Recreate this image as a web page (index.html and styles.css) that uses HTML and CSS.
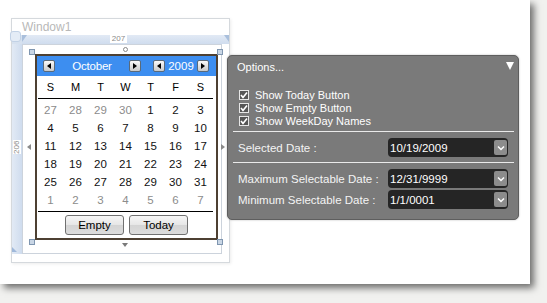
FILE: index.html
```html
<!DOCTYPE html>
<html>
<head>
<meta charset="utf-8">
<link rel="stylesheet" href="styles.css">
</head>
<body>
<div class="page">
  <div class="window">
    <div class="win-title">Window1</div>
    <div class="win-body">
      <div class="corner"><span class="corner-icon"></span></div>
      <div class="ruler-top"><span class="tick-l"></span><span class="ruler-label">207</span><span class="tick-r"></span></div>
      <div class="ruler-left"><span class="ruler-label vert">206</span><span class="tick-b"></span></div>
      <div class="surface">
        <div class="cal-wrap">
          <span class="handle h-tl"></span><span class="handle h-tr"></span>
          <span class="handle h-bl"></span><span class="handle h-br"></span>
          <span class="rot-dot"></span>
          <span class="arr arr-l"></span><span class="arr arr-r"></span><span class="arr arr-b"></span>
          <div class="calendar">
            <div class="cal-head">
              <div class="month-nav">
                <span class="nav-btn"><span class="tri-l"></span></span>
                <span class="month">October</span>
                <span class="nav-btn"><span class="tri-r"></span></span>
              </div>
              <div class="year-nav">
                <span class="nav-btn"><span class="tri-l"></span></span>
                <span class="year">2009</span>
                <span class="nav-btn"><span class="tri-r"></span></span>
              </div>
            </div>
            <div class="day-names"><span>S</span><span>M</span><span>T</span><span>W</span><span>T</span><span>F</span><span>S</span></div>
            <div class="rule"></div>
            <div class="dates">
              <span class="other">27</span><span class="other">28</span><span class="other">29</span><span class="other">30</span><span>1</span><span>2</span><span>3</span>
              <span>4</span><span>5</span><span>6</span><span>7</span><span>8</span><span>9</span><span>10</span>
              <span>11</span><span>12</span><span>13</span><span>14</span><span>15</span><span>16</span><span>17</span>
              <span>18</span><span>19</span><span>20</span><span>21</span><span>22</span><span>23</span><span>24</span>
              <span>25</span><span>26</span><span>27</span><span>28</span><span>29</span><span>30</span><span>31</span>
              <span class="other">1</span><span class="other">2</span><span class="other">3</span><span class="other">4</span><span class="other">5</span><span class="other">6</span><span class="other">7</span>
            </div>
            <div class="rule"></div>
            <div class="cal-foot">
              <span class="btn">Empty</span>
              <span class="btn">Today</span>
            </div>
          </div>
        </div>
      </div>
    </div>
  </div>

  <div class="options">
    <div class="opt-head">
      <span>Options...</span>
      <span class="opt-tri"></span>
    </div>
    <div class="checks">
      <div class="check-row"><span class="cb"><svg width="8" height="8" viewBox="0 0 8 8"><polyline points="1,4 3,6.5 7,1.5" fill="none" stroke="#fff" stroke-width="1.6"/></svg></span>Show Today Button</div>
      <div class="check-row"><span class="cb"><svg width="8" height="8" viewBox="0 0 8 8"><polyline points="1,4 3,6.5 7,1.5" fill="none" stroke="#fff" stroke-width="1.6"/></svg></span>Show Empty Button</div>
      <div class="check-row"><span class="cb"><svg width="8" height="8" viewBox="0 0 8 8"><polyline points="1,4 3,6.5 7,1.5" fill="none" stroke="#fff" stroke-width="1.6"/></svg></span>Show WeekDay Names</div>
    </div>
    <div class="sep sep-first"></div>
    <div class="fields">
      <div class="field"><span class="lbl">Selected Date :</span><span class="dd"><span class="dd-val">10/19/2009</span><span class="dd-btn"><svg width="8" height="6" viewBox="0 0 8 6"><polyline points="1,1.5 4,4.5 7,1.5" fill="none" stroke="#fff" stroke-width="1.5"/></svg></span></span></div>
    </div>
    <div class="sep"></div>
    <div class="fields two">
      <div class="field"><span class="lbl">Maximum Selectable Date :</span><span class="dd"><span class="dd-val">12/31/9999</span><span class="dd-btn"><svg width="8" height="6" viewBox="0 0 8 6"><polyline points="1,1.5 4,4.5 7,1.5" fill="none" stroke="#fff" stroke-width="1.5"/></svg></span></span></div>
      <div class="field"><span class="lbl">Minimum Selectable Date :</span><span class="dd"><span class="dd-val">1/1/0001</span><span class="dd-btn"><svg width="8" height="6" viewBox="0 0 8 6"><polyline points="1,1.5 4,4.5 7,1.5" fill="none" stroke="#fff" stroke-width="1.5"/></svg></span></span></div>
    </div>
  </div>
</div>
</body>
</html>
```
FILE: styles.css
```css
html, body { margin: 0; padding: 0; }
body {
  background: #f1f1ef;
  font-family: "Liberation Sans", Arial, sans-serif;
  width: 547px;
  height: 303px;
  overflow: hidden;
}
.page {
  position: relative;
  box-sizing: border-box;
  width: 530px;
  height: 284px;
  background: #fff;
  box-shadow: 4px 4px 7px rgba(0,0,0,0.55);
  padding: 18px 0 0 11px;
}
.window {
  box-sizing: border-box;
  width: 219px;
  height: 245px;
  border: 1px solid #d5d9dd;
  background: #fff;
  box-shadow: 1px 1px 3px rgba(0,0,0,0.08);
  display: flex;
  flex-direction: column;
}
.win-title {
  height: 16px;
  line-height: 16px;
  padding-left: 10px;
  font-size: 12px;
  color: #b8b8b8;
}
.win-body {
  flex: 1;
  display: grid;
  grid-template-columns: 10px 1fr;
  grid-template-rows: 9px 1fr;
}
.corner { background: #d6e1ef; position: relative; }
.corner-icon {
  position: absolute; left: -2px; top: -4px;
  width: 9px; height: 9px; border-radius: 3px;
  border: 1px solid #c2d2e6; background: #e4ecf6;
}
.ruler-top {
  background: linear-gradient(#e2eaf5, #cfdcee);
  position: relative;
  display: flex;
  justify-content: center;
}
.ruler-left {
  background: linear-gradient(90deg, #e2eaf5, #cfdcee);
  position: relative;
  margin-bottom: 8px;
}
.ruler-label {
  background: #fff;
  color: #8a8a8a;
  font-size: 8px;
  line-height: 8px;
  height: 8px;
  padding: 0 2px;
  margin-left: -14px;
}
.ruler-label.vert {
  position: absolute;
  left: 1px; top: 96px;
  width: 8px; height: 14px;
  padding: 0;
  margin: 0;
  writing-mode: vertical-rl;
  transform: rotate(180deg);
  text-align: center;
  line-height: 8px;
}
.tick-l {
  position: absolute; left: 0; top: 0;
  border-top: 7px solid #a9bfdc; border-right: 5px solid transparent;
}
.tick-r {
  position: absolute; right: 0; top: 0;
  border-top: 7px solid #a9bfdc; border-left: 5px solid transparent;
}
.tick-b {
  position: absolute; left: 0; bottom: 2px;
  border-bottom: 5px solid #9fb8da; border-right: 5px solid transparent;
}
.surface {
  box-sizing: border-box;
  border: 1px solid #ccd3dc;
  margin: 0 7px 8px 0;
  padding: 9px 0 0 12px;
}
.cal-wrap {
  position: relative;
  width: 183px;
  height: 186px;
}
.handle {
  position: absolute;
  width: 4px; height: 4px;
  border: 1px solid #7f96b0;
  background: #c9d6e5;
}
.h-tl { left: -6px; top: -5px; }
.h-tr { right: -5px; top: -5px; }
.h-bl { left: -6px; bottom: -5px; }
.h-br { right: -5px; bottom: -5px; }
.rot-dot {
  position: absolute; left: 88px; top: -7px;
  width: 3px; height: 3px; border-radius: 50%;
  border: 1px solid #888; background: #fff;
}
.arr { position: absolute; width: 0; height: 0; }
.arr-l { left: -8px; top: 90px; border-top: 3px solid transparent; border-bottom: 3px solid transparent; border-right: 4px solid #8a8a8a; }
.arr-r { right: -7px; top: 90px; border-top: 3px solid transparent; border-bottom: 3px solid transparent; border-left: 4px solid #8a8a8a; }
.arr-b { left: 87px; bottom: -7px; border-left: 3px solid transparent; border-right: 3px solid transparent; border-top: 4px solid #7a7a7a; }

.calendar {
  box-sizing: border-box;
  width: 183px;
  height: 186px;
  border: 2px solid #4d4032;
  background: #fff;
  font-size: 11px;
  color: #111;
}
.cal-head {
  height: 20px;
  background: #3d8ef0;
  display: flex;
  align-items: center;
  padding: 0 7px 0 6px;
  color: #fff;
}
.month-nav { flex: 1; display: flex; align-items: center; }
.month { flex: 1; text-align: center; font-size: 11.5px; letter-spacing: -0.2px; }
.year-nav { display: flex; align-items: center; margin-left: 12px; }
.year { width: 32px; text-align: center; font-size: 11.5px; }
.nav-btn {
  box-sizing: border-box;
  width: 12px; height: 12px;
  border: 1px solid #5a6a7a;
  border-radius: 2px;
  background: linear-gradient(#fafafa, #c9c9c9);
  display: flex; align-items: center; justify-content: center;
}
.tri-l { width: 0; height: 0; border-top: 3.5px solid transparent; border-bottom: 3.5px solid transparent; border-right: 4px solid #000; }
.tri-r { width: 0; height: 0; border-top: 3.5px solid transparent; border-bottom: 3.5px solid transparent; border-left: 4px solid #000; }
.day-names {
  height: 22px;
  display: grid;
  grid-template-columns: repeat(7, 25px);
  padding-left: 1px;
  align-items: center;
  text-align: center;
  color: #000;
}
.rule { height: 1px; background: #000; margin: 0 3px 0 1px; }
.dates {
  display: grid;
  grid-template-columns: repeat(7, 25px);
  grid-auto-rows: 18px;
  padding: 2px 0 2px 1px;
  align-items: center;
  text-align: center;
  font-size: 11.5px;
  color: #111;
}
.dates .other { color: #8c8c8c; }
.cal-foot {
  display: flex;
  justify-content: center;
  gap: 5px;
  padding-top: 3px;
}
.btn {
  box-sizing: border-box;
  width: 59px; height: 20px;
  border: 1px solid #707070;
  border-radius: 3px;
  background: linear-gradient(#f6f6f6 0%, #e6e6e6 50%, #d4d4d4 51%, #dcdcdc 100%);
  font-size: 11.5px;
  line-height: 18px;
  text-align: center;
  color: #000;
}

.options {
  position: absolute;
  left: 227px; top: 55px;
  box-sizing: border-box;
  width: 292px; height: 165px;
  border: 1px solid #5e5e5e;
  border-radius: 5px;
  background: #7a7a7a;
  color: #fff;
  box-shadow: 0 0 2px rgba(0,0,0,0.3);
}
.opt-head {
  height: 22px;
  display: flex;
  align-items: center;
  justify-content: space-between;
  padding: 0 4px 0 9px;
  font-size: 11px;
}
.opt-tri { width: 0; height: 0; border-left: 4px solid transparent; border-right: 4px solid transparent; border-top: 8px solid #fff; margin-top: -2px; }
.checks { margin-top: 10px; padding-left: 11px; }
.check-row {
  height: 13px;
  display: flex;
  align-items: center;
  gap: 6px;
  font-size: 11px;
}
.cb {
  box-sizing: border-box;
  width: 10px; height: 10px;
  border: 1px solid #e6e6e6;
  background: #555;
  display: flex; align-items: center; justify-content: center;
}
.sep { height: 1px; background: #eaeaea; margin: 0 4px 0 5px; }
.sep-first { margin-top: 4px; }
.fields { padding: 6px 10px 5px 10px; display: flex; flex-direction: column; gap: 2px; }
.fields.two { padding-bottom: 0; }
.field { display: grid; grid-template-columns: 150px 1fr; align-items: center; height: 19px; }
.lbl { font-size: 11.5px; color: #f4f4f4; }
.dd {
  box-sizing: border-box;
  height: 19px;
  border-radius: 4px;
  background: #252525;
  display: flex;
  align-items: center;
  justify-content: space-between;
  padding: 0 1px 0 2px;
}
.dd-val { font-size: 11.5px; color: #fff; }
.dd-btn {
  width: 13px; height: 15px;
  border-radius: 2px;
  background: #8c8c8c;
  display: flex; align-items: center; justify-content: center;
}
```
